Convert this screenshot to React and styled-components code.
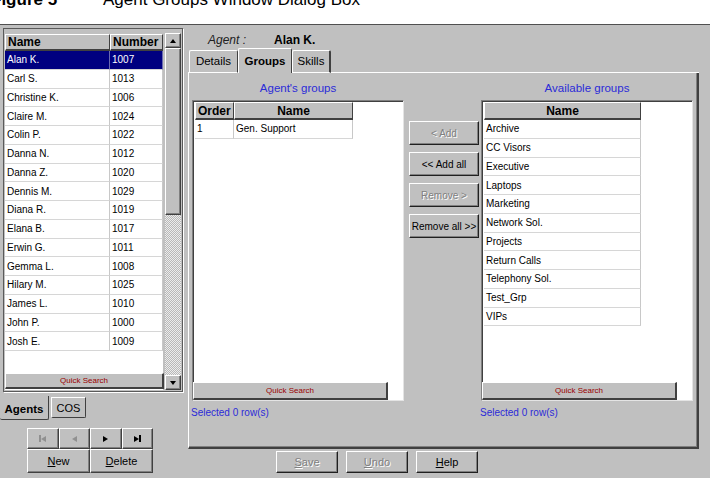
import React from 'react';
import styled, { createGlobalStyle, css } from 'styled-components';

const GRAY = '#c0c0c0';
const DARK = '#404040';
const MID = '#808080';
const BLUE = '#2b2bd8';
const FONT = '"Liberation Sans", Arial, sans-serif';

const GlobalStyle = createGlobalStyle`
  html, body { margin: 0; padding: 0; background: #fff; }
  body { font-family: ${FONT}; }
  #root { width: 710px; height: 478px; overflow: hidden; }
  *, *::before, *::after { box-sizing: border-box; }
`;

const raised = css`
  background: ${GRAY};
  border-top: 1px solid #fff;
  border-left: 1px solid #fff;
  border-right: 1px solid ${DARK};
  border-bottom: 1px solid ${DARK};
  box-shadow: inset -1px -1px 0 ${MID};
`;

const disabledText = css`
  color: ${MID};
  text-shadow: 1px 1px 0 #fff;
`;

/* ---------- page & caption ---------- */
const Page = styled.div`
  width: 710px;
  height: 478px;
  display: flex;
  flex-direction: column;
  background: #fff;
`;

const Caption = styled.div`
  flex: none;
  height: 24px;
  overflow: hidden;
  white-space: nowrap;
  font-family: ${FONT};
  font-size: 17px;
  line-height: 20px;
  color: #000;
`;

const CaptionLine = styled.div`
  margin: -10px 0 0 -9px;
`;

const FigNo = styled.b`
  display: inline-block;
  width: 112px;
`;

const Window = styled.div`
  flex: 1;
  display: flex;
  background: ${GRAY};
  border-top: 1px solid #505050;
  font-family: ${FONT};
  color: #000;
`;

/* ---------- generic grid ---------- */
const Grid = styled.div`
  display: flex;
  flex-direction: column;
  background: #fff;
  width: ${p => p.$w}px;
  margin-left: ${p => p.$ml || 0}px;
`;

const HeaderRow = styled.div`
  display: flex;
  flex: none;
  height: ${p => p.$h}px;
`;

const HeadCell = styled.div`
  width: ${p => p.$w}px;
  height: 100%;
  background: ${GRAY};
  border-top: 1px solid #fff;
  border-left: 1px solid #fff;
  border-right: 1px solid ${DARK};
  border-bottom: 2px solid ${DARK};
  font-size: 12px;
  font-weight: bold;
  display: flex;
  align-items: center;
  justify-content: ${p => (p.$center ? 'center' : 'flex-start')};
  padding: 0 2px;
  white-space: nowrap;
  overflow: hidden;
`;

const Row = styled.div`
  display: flex;
  flex: none;
  height: 18.75px;
  background: ${p => (p.$sel ? '#000080' : '#fff')};
  color: ${p => (p.$sel ? '#fff' : '#000')};
`;

const Cell = styled.div`
  width: ${p => p.$w}px;
  border-right: 1px solid ${p => (p.$sel ? '#6a6ab0' : '#c8c8c8')};
  border-bottom: 1px solid #d6d6d6;
  font-size: 10px;
  display: flex;
  align-items: center;
  padding-left: 2px;
  white-space: nowrap;
  overflow: hidden;
`;

const QuickSearch = styled.div`
  flex: none;
  margin-top: auto;
  width: ${p => p.$w}px;
  height: ${p => p.$h}px;
  margin-left: ${p => p.$ml || 0}px;
  margin-bottom: ${p => p.$mb || 0}px;
  background: ${GRAY};
  border-top: 1px solid #fff;
  border-left: 1px solid #fff;
  border-right: 2px solid ${DARK};
  border-bottom: 2px solid ${DARK};
  color: #9a0000;
  font-size: 8px;
  display: flex;
  align-items: center;
  justify-content: center;
`;

/* ---------- left pane ---------- */
const LeftPane = styled.div`
  width: 186px;
  flex: none;
  display: flex;
  flex-direction: column;
`;

const ListFrame = styled.div`
  flex: none;
  margin: 3px 0 0 3px;
  width: 180px;
  height: 364px;
  border: 1px solid #5a5a5a;
  box-shadow: 1px 1px 0 #fff;
  padding: 5px 1px 1px 1px;
  display: flex;
  gap: 2px;
`;

const ListColumn = styled(Grid)`
  flex: none;
`;

const ScrollBar = styled.div`
  width: 16px;
  flex: none;
  margin-top: -1px;
  display: flex;
  flex-direction: column;
`;

const ScrollButton = styled.div`
  ${raised};
  flex: none;
  height: 15px;
  display: flex;
  align-items: center;
  justify-content: center;
`;

const Thumb = styled.div`
  ${raised};
  flex: none;
  height: 167px;
`;

const Track = styled.div`
  flex: 1;
  background: repeating-conic-gradient(#b8b8b8 0 25%, #ececec 0 50%) 0 0 / 2px 2px;
`;

const Triangle = styled.span`
  display: inline-block;
  width: 0;
  height: 0;
  ${p =>
    p.$dir === 'up'
      ? css`border-left: 3.5px solid transparent; border-right: 3.5px solid transparent; border-bottom: 4px solid ${p.$c};`
      : p.$dir === 'down'
      ? css`border-left: 3.5px solid transparent; border-right: 3.5px solid transparent; border-top: 4px solid ${p.$c};`
      : p.$dir === 'left'
      ? css`border-top: 3.5px solid transparent; border-bottom: 3.5px solid transparent; border-right: 5px solid ${p.$c};`
      : css`border-top: 3.5px solid transparent; border-bottom: 3.5px solid transparent; border-left: 5px solid ${p.$c};`}
`;

const Bar = styled.span`
  display: inline-block;
  width: 2px;
  height: 7px;
  background: ${p => p.$c};
`;

const SideTabs = styled.div`
  flex: none;
  display: flex;
  align-items: flex-start;
  margin-top: 4px;
  height: 24px;
`;

const SideTab = styled.div`
  flex: none;
  width: ${p => p.$w}px;
  height: ${p => (p.$active ? 24 : 21)}px;
  margin-left: ${p => (p.$active ? 0 : 2)}px;
  margin-top: ${p => (p.$active ? 0 : 1)}px;
  background: ${GRAY};
  border-left: ${p => (p.$active ? 'none' : '1px solid #fff')};
  border-top: ${p => (p.$active ? 'none' : '1px solid #fff')};
  border-right: 1px solid ${DARK};
  border-bottom: 1px solid ${DARK};
  border-radius: 0 0 2px 2px;
  font-size: ${p => (p.$active ? 11.5 : 11)}px;
  font-weight: ${p => (p.$active ? 'bold' : 'normal')};
  line-height: 14px;
  padding-top: ${p => (p.$active ? 6 : 3)}px;
  text-align: center;
`;

const NavGrid = styled.div`
  flex: none;
  margin: 8px 0 0 27px;
  width: 126px;
  display: grid;
  grid-template-columns: repeat(4, 1fr);
  grid-template-rows: 21px 24px;
`;

const NavButton = styled.div`
  ${raised};
  grid-column: span ${p => p.$span || 1};
  display: flex;
  align-items: center;
  justify-content: center;
  font-size: 11px;
`;

const Key = styled.span`
  text-decoration: underline;
`;

/* ---------- right pane ---------- */
const RightPane = styled.div`
  flex: 1;
  display: flex;
  flex-direction: column;
  padding: 0 11px 0 2px;
`;

const AgentLine = styled.div`
  flex: none;
  height: 23px;
  padding: 6px 0 0 20px;
  display: flex;
  align-items: center;
  font-size: 12px;
`;

const AgentLabel = styled.span`
  width: 66px;
  font-style: italic;
  color: #202020;
`;

const AgentName = styled.span`
  font-weight: bold;
`;

const TabRow = styled.div`
  flex: none;
  height: 25px;
  display: flex;
  align-items: flex-end;
`;

const TabLead = styled.div`
  width: 1px;
  height: 1px;
  background: #fff;
`;

const Tab = styled.div`
  flex: none;
  width: ${p => p.$w}px;
  height: ${p => (p.$active ? 25 : 23)}px;
  background: ${GRAY};
  border-top: 1px solid #fff;
  border-left: 1px solid #fff;
  border-right: ${p => (p.$last ? 2 : 1)}px solid ${DARK};
  border-bottom: ${p => (p.$active ? 'none' : '1px solid #fff')};
  border-radius: 2px 2px 0 0;
  font-size: 11.5px;
  font-weight: ${p => (p.$active ? 'bold' : 'normal')};
  line-height: ${p => (p.$active ? 24 : 20)}px;
  text-align: center;
`;

const TabFill = styled.div`
  flex: 1;
  height: 1px;
  background: #fff;
`;

const Panel = styled.div`
  flex: none;
  height: 376px;
  border-left: 1px solid #fff;
  border-right: 2px solid ${DARK};
  border-bottom: 2px solid ${DARK};
  box-shadow: inset -1px -1px 0 ${MID};
  padding: 0 4px 0 3px;
  display: flex;
`;

const GroupColumn = styled.div`
  width: 212px;
  flex: none;
  display: flex;
  flex-direction: column;
  margin-left: ${p => p.$ml || 0}px;
`;

const GroupTitle = styled.div`
  flex: none;
  height: 27px;
  padding-top: 8px;
  line-height: 14px;
  font-size: 11.5px;
  color: ${BLUE};
  text-align: center;
`;

const ListBox = styled.div`
  flex: none;
  height: 301px;
  background: #fff;
  display: flex;
  flex-direction: column;
  border-top: 1px solid ${MID};
  border-left: 1px solid ${MID};
  border-right: 1px solid #e4e4e4;
  border-bottom: 1px solid #e4e4e4;
  box-shadow: inset 1px 1px 0 ${DARK};
  padding: 1px 0 0 1px;
`;

const Status = styled.div`
  padding-top: 6px;
  margin-left: -1px;
  font-size: 10px;
  line-height: 12px;
  color: ${BLUE};
`;

const ButtonColumn = styled.div`
  width: 70px;
  flex: none;
  margin-left: 5px;
  padding-top: 48px;
  display: flex;
  flex-direction: column;
  gap: 7px;
`;

const PushButton = styled.div`
  background: ${GRAY};
  border-top: 1px solid #fff;
  border-left: 1px solid #fff;
  border-right: 1px solid #202020;
  border-bottom: 1px solid #202020;
  box-shadow: inset -1px -1px 0 ${MID};
  flex: none;
  width: ${p => p.$w}px;
  height: ${p => p.$h}px;
  display: flex;
  align-items: center;
  justify-content: center;
  font-size: ${p => p.$fs}px;
  white-space: nowrap;
  ${p => p.$disabled && disabledText};
`;

const Footer = styled.div`
  flex: none;
  display: flex;
  gap: 8px;
  padding: 2px 0 0 88px;
`;

/* ---------- data ---------- */
const agents = [
  ['Alan K.', '1007'],
  ['Carl S.', '1013'],
  ['Christine K.', '1006'],
  ['Claire M.', '1024'],
  ['Colin P.', '1022'],
  ['Danna N.', '1012'],
  ['Danna Z.', '1020'],
  ['Dennis M.', '1029'],
  ['Diana R.', '1019'],
  ['Elana B.', '1017'],
  ['Erwin G.', '1011'],
  ['Gemma L.', '1008'],
  ['Hilary M.', '1025'],
  ['James L.', '1010'],
  ['John P.', '1000'],
  ['Josh E.', '1009'],
];

const available = [
  'Archive',
  'CC Visors',
  'Executive',
  'Laptops',
  'Marketing',
  'Network Sol.',
  'Projects',
  'Return Calls',
  'Telephony Sol.',
  'Test_Grp',
  'VIPs',
];

export default function App() {
  return (
    <Page>
      <GlobalStyle />
      <Caption>
        <CaptionLine>
          <FigNo>Figure 5</FigNo>
          <span>Agent Groups Window Dialog Box</span>
        </CaptionLine>
      </Caption>

      <Window>
        <LeftPane>
          <ListFrame>
            <ListColumn $w={158}>
              <HeaderRow $h={17}>
                <HeadCell $w={105}>Name</HeadCell>
                <HeadCell $w={53}>Number</HeadCell>
              </HeaderRow>
              {agents.map(([name, num], i) => (
                <Row key={name} $sel={i === 0}>
                  <Cell $w={105} $sel={i === 0}>{name}</Cell>
                  <Cell $w={53} $sel={i === 0}>{num}</Cell>
                </Row>
              ))}
              <QuickSearch $w={159} $h={16} $mb={1}>Quick Search</QuickSearch>
            </ListColumn>
            <ScrollBar>
              <ScrollButton><Triangle $dir="up" $c="#000" /></ScrollButton>
              <Thumb />
              <Track />
              <ScrollButton><Triangle $dir="down" $c="#000" /></ScrollButton>
            </ScrollBar>
          </ListFrame>

          <SideTabs>
            <SideTab $active $w={49}>Agents</SideTab>
            <SideTab $w={35}>COS</SideTab>
          </SideTabs>

          <NavGrid>
            <NavButton><Bar $c="#909090" /><Triangle $dir="left" $c="#909090" /></NavButton>
            <NavButton><Triangle $dir="left" $c="#909090" /></NavButton>
            <NavButton><Triangle $dir="right" $c="#000" /></NavButton>
            <NavButton><Triangle $dir="right" $c="#000" /><Bar $c="#000" /></NavButton>
            <NavButton $span={2}><Key>N</Key>ew</NavButton>
            <NavButton $span={2}><Key>D</Key>elete</NavButton>
          </NavGrid>
        </LeftPane>

        <RightPane>
          <AgentLine>
            <AgentLabel>Agent :</AgentLabel>
            <AgentName>Alan K.</AgentName>
          </AgentLine>

          <TabRow>
            <TabLead />
            <Tab $w={49}>Details</Tab>
            <Tab $w={54} $active>Groups</Tab>
            <Tab $w={39} $last>Skills</Tab>
            <TabFill />
          </TabRow>

          <Panel>
            <GroupColumn>
              <GroupTitle>Agent's groups</GroupTitle>
              <ListBox>
                <Grid $w={158} $ml={1}>
                  <HeaderRow $h={18}>
                    <HeadCell $w={39}>Order</HeadCell>
                    <HeadCell $w={119} $center>Name</HeadCell>
                  </HeaderRow>
                  <Row>
                    <Cell $w={39}>1</Cell>
                    <Cell $w={119}>Gen. Support</Cell>
                  </Row>
                </Grid>
                <QuickSearch $w={195} $h={18} $ml={-1}>Quick Search</QuickSearch>
              </ListBox>
              <Status>Selected 0 row(s)</Status>
            </GroupColumn>

            <ButtonColumn>
              <PushButton $w={70} $h={24} $fs={10} $disabled>&lt; Add</PushButton>
              <PushButton $w={70} $h={24} $fs={10}>&lt;&lt; Add all</PushButton>
              <PushButton $w={70} $h={24} $fs={10} $disabled>Remove &gt;</PushButton>
              <PushButton $w={70} $h={24} $fs={10}>Remove all &gt;&gt;</PushButton>
            </ButtonColumn>

            <GroupColumn $ml={2}>
              <GroupTitle>Available groups</GroupTitle>
              <ListBox>
                <Grid $w={157} $ml={1}>
                  <HeaderRow $h={18}>
                    <HeadCell $w={157} $center>Name</HeadCell>
                  </HeaderRow>
                  {available.map(g => (
                    <Row key={g}>
                      <Cell $w={157}>{g}</Cell>
                    </Row>
                  ))}
                </Grid>
                <QuickSearch $w={195} $h={18} $ml={-1}>Quick Search</QuickSearch>
              </ListBox>
              <Status>Selected 0 row(s)</Status>
            </GroupColumn>
          </Panel>

          <Footer>
            <PushButton $w={62} $h={22} $fs={11} $disabled><Key>S</Key>ave</PushButton>
            <PushButton $w={62} $h={22} $fs={11} $disabled><Key>U</Key>ndo</PushButton>
            <PushButton $w={62} $h={22} $fs={11}><Key>H</Key>elp</PushButton>
          </Footer>
        </RightPane>
      </Window>
    </Page>
  );
}
